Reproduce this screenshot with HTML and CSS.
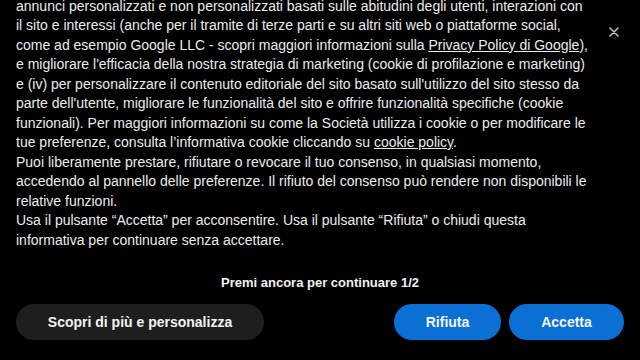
FILE: index.html
```html
<!DOCTYPE html>
<html lang="it">
<head>
<meta charset="utf-8">
<title>Cookie</title>
<link rel="stylesheet" href="styles.css">
</head>
<body>
<div class="banner">
  <button class="close" aria-label="Chiudi">
    <svg width="10" height="10" viewBox="0 0 10 10"><path d="M1 1L9 9M9 1L1 9" stroke="#c8c8c8" stroke-width="1.5" stroke-linecap="round"/></svg>
  </button>
  <div class="text">
    <p class="body">annunci personalizzati e non personalizzati basati sulle abitudini degli utenti, interazioni con il sito e interessi (anche per il tramite di terze parti e su altri siti web o piattaforme social, come ad esempio Google LLC - scopri maggiori informazioni sulla <a href="#">Privacy Policy di Google</a>), e migliorare l'efficacia della nostra strategia di marketing (cookie di profilazione e marketing) e (iv) per personalizzare il contenuto editoriale del sito basato sull'utilizzo del sito stesso da parte dell'utente, migliorare le funzionalità del sito e offrire funzionalità specifiche (cookie funzionali). Per maggiori informazioni su come la Società utilizza i cookie o per modificare le tue preferenze, consulta l’informativa cookie cliccando su <a href="#">cookie policy</a>.<br>Puoi liberamente prestare, rifiutare o revocare il tuo consenso, in qualsiasi momento, accedendo al pannello delle preferenze. Il rifiuto del consenso può rendere non disponibili le relative funzioni.<br>Usa il pulsante “Accetta” per acconsentire. Usa il pulsante “Rifiuta” o chiudi questa informativa per continuare senza accettare.</p>
  </div>
  <div class="footer">
    <p class="prompt">Premi ancora per continuare 1/2</p>
    <div class="actions">
      <button class="btn btn-dark">Scopri di più e personalizza</button>
      <div class="group">
        <button class="btn btn-blue btn-reject">Rifiuta</button>
        <button class="btn btn-blue btn-accept">Accetta</button>
      </div>
    </div>
  </div>
</div>
</body>
</html>
```
FILE: styles.css
```css
* { box-sizing: border-box; }
html, body { margin: 0; padding: 0; background: #000; }
body { font-family: "Liberation Sans", Arial, sans-serif; color: #ececec; }
.banner {
  position: relative;
  width: 640px;
  height: 360px;
  display: flex;
  flex-direction: column;
  overflow: hidden;
}
.close {
  position: absolute;
  top: 27px;
  left: 609px;
  width: 10px;
  height: 10px;
  padding: 0;
  border: 0;
  background: transparent;
  display: flex;
}
.text {
  flex: 1;
  min-height: 0;
  overflow: hidden;
  display: flex;
  flex-direction: column;
  justify-content: flex-end;
  padding: 0 48px 0 16px;
}
.body {
  margin: 0;
  font-size: 14px;
  line-height: 19.5px;
}
.body a { color: #ececec; text-decoration: underline; }
.footer { padding: 25px 16px 20px; }
.prompt {
  margin: 0 0 13px;
  text-align: center;
  font-size: 13px;
  font-weight: bold;
  line-height: 16px;
  color: #f2f2f2;
}
.actions { display: flex; justify-content: space-between; align-items: center; }
.group { display: flex; gap: 8px; }
.btn {
  height: 36px;
  border: 0;
  border-radius: 18px;
  font-family: "Liberation Sans", Arial, sans-serif;
  font-size: 14px;
  font-weight: bold;
  color: #f4f4f4;
  padding: 0;
}
.btn-dark { width: 248px; background: #1e1e1e; }
.btn-blue { background: #0b70d4; }
.btn-reject { width: 107px; }
.btn-accept { width: 115px; }
```
